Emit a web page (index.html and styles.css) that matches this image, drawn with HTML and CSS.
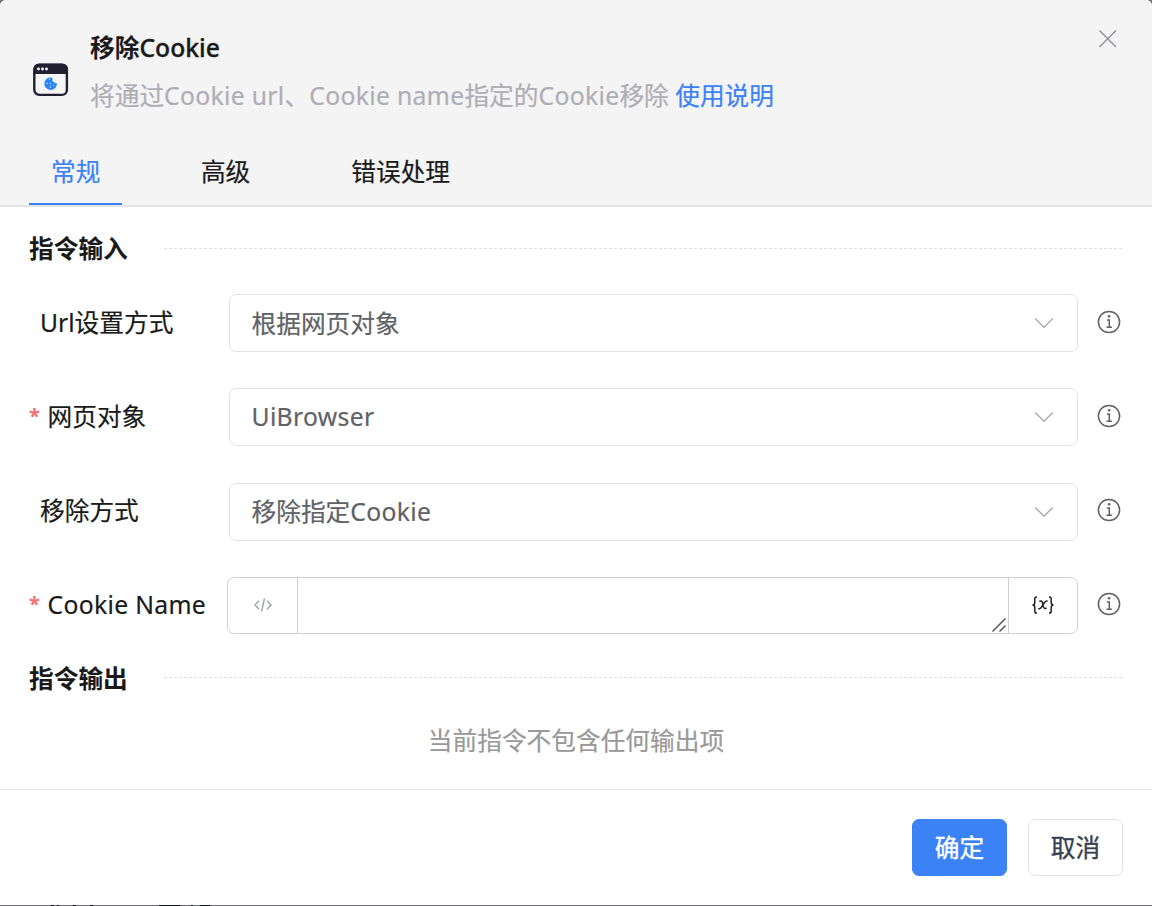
FILE: index.html
```html
<!DOCTYPE html>
<html lang="zh-CN">
<head>
<meta charset="utf-8">
<title>移除Cookie</title>
<link rel="stylesheet" href="styles.css">
</head>
<body>
<svg width="0" height="0" class="defs">
  <symbol id="info" viewBox="0 0 24 24">
    <circle cx="12" cy="12" r="10.6" fill="none" stroke="#606166" stroke-width="1.5"/>
    <circle cx="12.1" cy="6.3" r="1.3" fill="#606166"/>
    <path d="M9.9 10H12.3V17.2M9.5 17.3H14.9" fill="none" stroke="#606166" stroke-width="1.5"/>
  </symbol>
  <symbol id="chevron" viewBox="0 0 20 12">
    <path d="M1.2 1.5L10 10.2L18.8 1.5" fill="none" stroke="#a8abb2" stroke-width="1.4"/>
  </symbol>
</svg>
<main class="dialog">
  <header class="head">
    <div class="intro">
      <svg class="logo" width="36" height="34" viewBox="0 0 36 34">
        <rect x="1.3" y="1.7" width="32.6" height="30.2" rx="5" fill="#f5f5f5" stroke="#231f33" stroke-width="2.4"/>
        <path d="M.5 11V6.5Q.5.8 6.2.8H29Q35 .8 35 6.5V11Z" fill="#231f33"/>
        <g fill="#fff"><circle cx="5.5" cy="6" r="1.4"/><circle cx="9.5" cy="6" r="1.4"/><circle cx="13.5" cy="6" r="1.4"/></g>
        <path d="M19.1 14.6A6.3 6.3 0 1 0 23.9 20.1Q22 20.8 21 18.9Q18.8 18.6 19.7 16.5Q18.8 15.8 19.1 14.6Z" fill="#2b83fa"/>
        <g fill="#e8f1ff"><circle cx="16.5" cy="16.4" r=".55"/><circle cx="14.2" cy="20.4" r=".65"/><circle cx="17.5" cy="20.8" r=".7"/><circle cx="17.3" cy="24" r=".65"/><circle cx="20.5" cy="22.5" r=".55"/></g>
      </svg>
      <div class="copy">
        <h1>移除<span class="latin">Cookie</span></h1>
        <p>将通过<span class="wide">Cookie url</span>、<span class="wide">Cookie name</span>指定的<span class="wide">Cookie</span>移除 <a>使用说明</a></p>
      </div>
      <svg class="close" width="20" height="20" viewBox="0 0 20 20"><path d="M1.5 1.5L18 18M18 1.5L1.5 18" stroke="#909399" stroke-width="1.5"/></svg>
    </div>
    <nav class="tabs">
      <div class="tab active">常规</div>
      <div class="tab">高级</div>
      <div class="tab">错误处理</div>
    </nav>
  </header>
  <section class="body">
    <h2><span>指令输入</span><i></i></h2>
    <div class="row">
      <label class="plain">Url设置方式</label>
      <div class="select"><span class="han">根据网页对象</span><svg width="20" height="12"><use href="#chevron"/></svg></div>
      <svg class="info" width="24" height="24"><use href="#info"/></svg>
    </div>
    <div class="row">
      <label><b>*</b>网页对象</label>
      <div class="select"><span class="wide">UiBrowser</span><svg width="20" height="12"><use href="#chevron"/></svg></div>
      <svg class="info" width="24" height="24"><use href="#info"/></svg>
    </div>
    <div class="row lower">
      <label class="plain">移除方式</label>
      <div class="select"><span>移除指定<span class="wide">Cookie</span></span><svg width="20" height="12"><use href="#chevron"/></svg></div>
      <svg class="info" width="24" height="24"><use href="#info"/></svg>
    </div>
    <div class="row lower">
      <label><b>*</b><span class="wide">Cookie Name</span></label>
      <div class="group">
        <div class="mode"><svg width="18" height="14" viewBox="0 0 18 14"><path d="M5 2.8L1 7L5 11.2M13 2.8L17 7L13 11.2M10.5 .5L7.5 13.5" fill="none" stroke="#a0a2a8" stroke-width="1.4"/></svg></div>
        <div class="input"><svg width="14" height="14" viewBox="0 0 14 14"><path d="M.5 13.5L13.5 .5M7.5 13.5L13.5 7.5" stroke="#555" stroke-width="1.5"/></svg></div>
        <div class="var"><svg width="24" height="18" viewBox="0 0 24 18"><path d="M6 1H5.5Q3.8 1 3.8 2.8V6.5Q3.8 9 1.5 9Q3.8 9 3.8 11.5V15.2Q3.8 17 5.5 17H6M18 1H18.5Q20.2 1 20.2 2.8V6.5Q20.2 9 22.5 9Q20.2 9 20.2 11.5V15.2Q20.2 17 18.5 17H18M8.3 5.4Q10.6 4.3 11.3 6.3L12.6 11.2Q13.4 13.2 15.5 12M16.6 5.2Q15 4.5 13.6 6.5L10.3 11.3Q9 13.2 7.3 12.5" fill="none" stroke="#222" stroke-width="1.5"/></svg></div>
      </div>
      <svg class="info" width="24" height="24"><use href="#info"/></svg>
    </div>
    <h2 class="output"><span>指令输出</span><i></i></h2>
    <p class="empty">当前指令不包含任何输出项</p>
  </section>
  <footer class="foot">
    <button class="primary">确定</button>
    <button>取消</button>
  </footer>
</main>
<svg class="backdrop" width="1152" height="1"><path d="M51 .5h3m3 0h2m14 0h3m14 0h3m66 0h21m11 0h2m7 0h10" stroke="#111118"/></svg>
</body>
</html>
```
FILE: styles.css
```css
* { box-sizing: border-box; }
body { margin: 0; height: 906px; overflow: hidden; background: #737378; color: #1a1a1a; font: 24.7px/36px "Noto Sans", "Noto Sans CJK SC", sans-serif; -webkit-text-stroke: .2px currentColor; }
h1, h2, p { margin: 0; }
svg { display: block; flex: none; }
.defs { position: absolute; }
.wide { letter-spacing: .33px; }
.dialog { height: 905px; display: flex; flex-direction: column; background: #fff; border-radius: 6px 6px 0 0; overflow: hidden; }
.backdrop { height: 1px; }
.head { height: 207px; background: #f4f4f4; border-bottom: 2px solid #e4e4e4; display: flex; flex-direction: column; }
.intro { height: 137px; display: flex; padding: 29px 34px 0 33px; }
.logo { margin: 34px 21px 0 0; }
.copy { flex: 1; }
h1 { font-size: 24.7px; font-weight: 700; line-height: 36px; padding-top: 1px; -webkit-text-stroke: 0; }
h1 .latin { font-weight: 500; -webkit-text-stroke: .35px currentColor; }
.copy p { margin-top: 12px; color: #afadb5; white-space: nowrap; }
.copy a { color: #3b82f6; }
.tabs { display: flex; height: 68px; padding-left: 29px; gap: 57px; }
.tab { padding: 17px 22px 0; height: 68px; }
.tab + .tab { padding-left: 21.5px; padding-right: 22.5px; }
.tab.active { color: #3b82f6; border-bottom: 2px solid #3b82f6; }
.body { height: 582px; padding: 23px 29px 0; display: flex; flex-direction: column; }
h2 { display: flex; align-items: center; gap: 36px; height: 36px; font-size: 24.7px; font-weight: 700; line-height: 36px; -webkit-text-stroke: 0; }
h2 span { padding-top: 2px; }
h2 i { flex: 1; height: 1px; background: repeating-linear-gradient(90deg, #dcdfe6 0 3px, transparent 3px 5px); }
.row { display: flex; height: 58px; margin-top: 36.3px; }
h2 + .row { margin-top: 28px; }
label { width: 200px; padding-top: 1px; line-height: 56px; white-space: nowrap; display: flex; }
.lower label { padding-top: 0; }
label.plain { padding-left: 11px; }
label b { width: 18.5px; font-size: 20px; font-weight: 600; line-height: 53px; color: #f56c6c; }
.select { width: 849px; border: 1px solid #e4e4e7; border-radius: 7px; display: flex; align-items: center; justify-content: space-between; padding: 0 23.5px 0 21.5px; color: #606266; }
.select .han { padding-top: 2px; }
.info { margin: 16px 0 0 18.5px; }
.lower .info { margin-top: 15px; }
.group { display: flex; width: 851px; height: 57px; margin-left: -2px; border: 1px solid #d0d0d3; border-radius: 7px; }
.mode { width: 70px; border-right: 1px solid #d0d0d3; display: grid; place-items: center; }
.input { flex: 1; display: flex; align-items: flex-end; justify-content: flex-end; padding: 0 2px 1px; }
.var { width: 69px; border-left: 1px solid #d0d0d3; display: grid; place-items: center; }
.output { margin-top: 25px; }
.empty { margin-top: 27px; text-align: center; color: #999; }
.foot { flex: 1; border-top: 1px solid #e4e4e4; display: flex; gap: 21px; justify-content: flex-end; padding: 29px 29px 0; }
button { width: 95px; height: 57px; padding: 0; border: 1px solid #e4e4e7; border-radius: 7px; background: #fff; color: #374151; font: inherit; -webkit-text-stroke: .35px currentColor; }
.primary { background: #3b82f6; border-color: #3b82f6; color: #fff; }
```
